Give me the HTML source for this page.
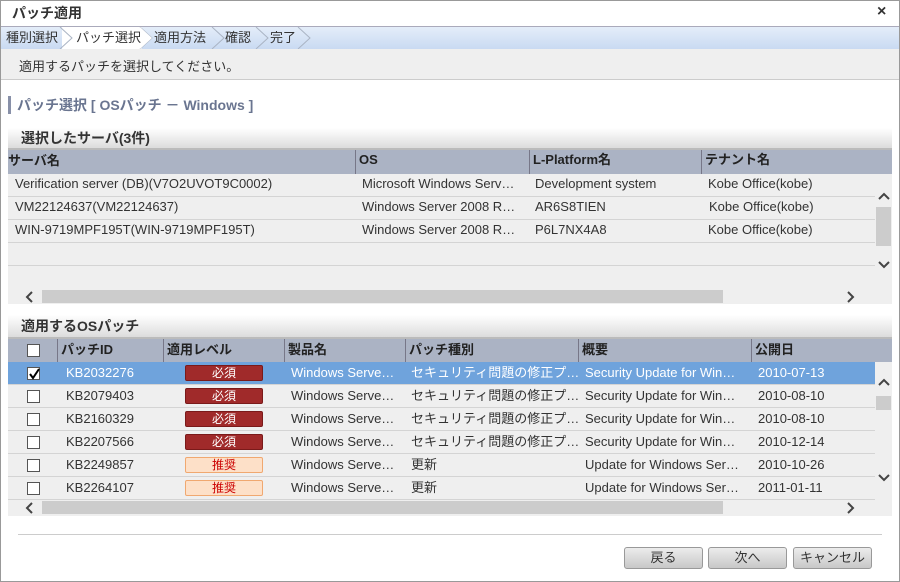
<!DOCTYPE html><html><head><meta charset="utf-8"><style>
*{margin:0;padding:0;box-sizing:border-box}
body{width:900px;height:582px;overflow:hidden;background:#fff;font-family:"Liberation Sans","Noto Sans CJK JP",sans-serif;font-size:13px;line-height:16px;color:#333;position:relative}
.a{position:absolute}
.frame{left:0;top:0;width:900px;height:582px;border:1px solid #999}
.hdr{background:#abb3c4;font-weight:bold;color:#222}
.cell{position:absolute;white-space:nowrap;overflow:hidden;line-height:16px}
.row{position:absolute;left:8px;width:867px;height:23px;border-bottom:1px solid #d4d4d4;background:#efefef}
.cb{position:absolute;width:13px;height:13px;border:1px solid #555;background:#fff}
.bad{position:absolute;left:177px;width:78px;height:16px;top:3px;border-radius:2px;text-align:center;font-size:12px;line-height:14px}
.r{background:#a02a2a;color:#fff;border:1px solid #7a1a1a}
.y{background:#fde0c8;color:#c00;border:1px solid #f0a870}
.btn{position:absolute;top:547px;height:22px;width:79px;border:1px solid #999;border-radius:3px;background:linear-gradient(#ececec,#c8c8c8);text-align:center;line-height:20px;font-size:13px}
.sec{left:8px;width:884px;background:linear-gradient(#fff,#dcdcdc);font-weight:bold;font-size:14px;padding-left:13px;border-bottom:2px solid #bbb}
.hc{position:absolute;white-space:nowrap;border-left:1px solid #778;padding:0 3px;font-weight:bold;color:#222}
</style></head><body>
<div class="a frame"></div>
<div class="a" style="left:12px;top:5px;font-weight:bold;font-size:14px">パッチ適用</div>
<div class="a" style="left:877px;top:4px;font-size:16px;font-weight:bold">×</div>
<div class="a" style="left:1px;top:26px;width:898px;height:23px;background:linear-gradient(#e4edf9,#c9daf2);border-top:1px solid #aab"></div>
<div class="a" style="left:62px;top:27px;width:80px;height:22px;background:#fff"></div>
<svg class="a" style="left:0;top:27px" width="320" height="22"><g fill="none" stroke="#aab4c4"><path d="M60 0L72 11L60 22"/><path d="M140 0L152 11L140 22"/><path d="M212 0L224 11L212 22"/><path d="M256 0L268 11L256 22"/><path d="M298 0L310 11L298 22"/></g><path d="M140 0L152 11L140 22Z" fill="#fff"/></svg>
<div class="a" style="left:6px;top:30px">種別選択</div>
<div class="a" style="left:76px;top:30px">パッチ選択</div>
<div class="a" style="left:154px;top:30px">適用方法</div>
<div class="a" style="left:225px;top:30px">確認</div>
<div class="a" style="left:270px;top:30px">完了</div>
<div class="a" style="left:1px;top:49px;width:898px;height:31px;background:#efefef;border-bottom:1px solid #ccc"></div>
<div class="a" style="left:19px;top:59px">適用するパッチを選択してください。</div>
<div class="a" style="left:8px;top:96px;width:3px;height:18px;background:#8890a8"></div>
<div class="a" style="left:17px;top:97px;font-size:14px;font-weight:bold;color:#6a7590">パッチ選択 [ OSパッチ － Windows ]</div>

<div class="a sec" style="top:128px;height:22px;line-height:20px">選択したサーバ(3件)</div>
<div class="a hdr" style="left:8px;top:150px;width:884px;height:24px"></div>
<div class="a" style="left:8px;top:174px;width:884px;height:130px;background:#efefef"></div>
<div class="cell hdr" style="left:8px;top:153px;background:none">サーバ名</div>
<div class="hc" style="left:355px;top:150px;height:24px;padding-top:2px">OS</div>
<div class="hc" style="left:529px;top:150px;height:24px;padding-top:2px">L-Platform名</div>
<div class="hc" style="left:701px;top:150px;height:24px;padding-top:2px">テナント名</div>
<div class="row" style="top:174px"></div><div class="row" style="top:197px"></div><div class="row" style="top:220px"></div><div class="row" style="top:243px"></div>
<div class="cell" style="left:15px;top:176px">Verification server (DB)(V7O2UVOT9C0002)</div><div class="cell" style="left:362px;top:176px">Microsoft Windows Serv…</div><div class="cell" style="left:535px;top:176px">Development system</div><div class="cell" style="left:708px;top:176px">Kobe Office(kobe)</div>
<div class="cell" style="left:15px;top:199px">VM22124637(VM22124637)</div><div class="cell" style="left:362px;top:199px">Windows Server 2008 R…</div><div class="cell" style="left:535px;top:199px">AR6S8TIEN</div><div class="cell" style="left:709px;top:199px">Kobe Office(kobe)</div>
<div class="cell" style="left:15px;top:222px">WIN-9719MPF195T(WIN-9719MPF195T)</div><div class="cell" style="left:362px;top:222px">Windows Server 2008 R…</div><div class="cell" style="left:535px;top:222px">P6L7NX4A8</div><div class="cell" style="left:708px;top:222px">Kobe Office(kobe)</div>
<div class="a" style="left:876px;top:207px;width:15px;height:39px;background:#ccc"></div>
<svg class="a" style="left:876px;top:190px" width="16" height="80"><g fill="none" stroke="#444" stroke-width="2"><path d="M3 9L8 4L13 9"/><path d="M3 72L8 77L13 72"/></g></svg>
<div class="a" style="left:42px;top:290px;width:681px;height:13px;background:#ccc"></div>
<svg class="a" style="left:22px;top:290px" width="840" height="14"><g fill="none" stroke="#444" stroke-width="2"><path d="M10 2L5 7L10 12"/><path d="M826 2L831 7L826 12"/></g></svg>

<div class="a sec" style="top:315px;height:24px;line-height:22px">適用するOSパッチ</div>
<div class="a hdr" style="left:8px;top:339px;width:884px;height:23px"></div>
<div class="a" style="left:8px;top:362px;width:884px;height:154px;background:#efefef"></div>
<div class="cb" style="left:27px;top:344px"></div>
<div class="hc" style="left:57px;top:339px;height:23px;padding-top:3px">パッチID</div>
<div class="hc" style="left:163px;top:339px;height:23px;padding-top:3px">適用レベル</div>
<div class="hc" style="left:284px;top:339px;height:23px;padding-top:3px">製品名</div>
<div class="hc" style="left:405px;top:339px;height:23px;padding-top:3px">パッチ種別</div>
<div class="hc" style="left:578px;top:339px;height:23px;padding-top:3px">概要</div>
<div class="hc" style="left:751px;top:339px;height:23px;padding-top:3px">公開日</div>

<div class="row" style="top:362px;background:#6fa3dc;color:#fff"><div class="cb" style="left:19px;top:5px"></div><svg class="a" style="left:20px;top:6px" width="12" height="12"><path d="M2 6L5 10L11 1" fill="none" stroke="#000" stroke-width="2"/></svg><div class="cell" style="left:58px;top:3px">KB2032276</div><div class="bad r">必須</div><div class="cell" style="left:283px;top:3px">Windows Serve…</div><div class="cell" style="left:403px;top:3px">セキュリティ問題の修正プ…</div><div class="cell" style="left:577px;top:3px">Security Update for Win…</div><div class="cell" style="left:750px;top:3px">2010-07-13</div></div>
<div class="row" style="top:385px"><div class="cb" style="left:19px;top:5px"></div><div class="cell" style="left:58px;top:3px">KB2079403</div><div class="bad r">必須</div><div class="cell" style="left:283px;top:3px">Windows Serve…</div><div class="cell" style="left:403px;top:3px">セキュリティ問題の修正プ…</div><div class="cell" style="left:577px;top:3px">Security Update for Win…</div><div class="cell" style="left:750px;top:3px">2010-08-10</div></div>
<div class="row" style="top:408px"><div class="cb" style="left:19px;top:5px"></div><div class="cell" style="left:58px;top:3px">KB2160329</div><div class="bad r">必須</div><div class="cell" style="left:283px;top:3px">Windows Serve…</div><div class="cell" style="left:403px;top:3px">セキュリティ問題の修正プ…</div><div class="cell" style="left:577px;top:3px">Security Update for Win…</div><div class="cell" style="left:750px;top:3px">2010-08-10</div></div>
<div class="row" style="top:431px"><div class="cb" style="left:19px;top:5px"></div><div class="cell" style="left:58px;top:3px">KB2207566</div><div class="bad r">必須</div><div class="cell" style="left:283px;top:3px">Windows Serve…</div><div class="cell" style="left:403px;top:3px">セキュリティ問題の修正プ…</div><div class="cell" style="left:577px;top:3px">Security Update for Win…</div><div class="cell" style="left:750px;top:3px">2010-12-14</div></div>
<div class="row" style="top:454px"><div class="cb" style="left:19px;top:5px"></div><div class="cell" style="left:58px;top:3px">KB2249857</div><div class="bad y">推奨</div><div class="cell" style="left:283px;top:3px">Windows Serve…</div><div class="cell" style="left:403px;top:3px">更新</div><div class="cell" style="left:577px;top:3px">Update for Windows Ser…</div><div class="cell" style="left:750px;top:3px">2010-10-26</div></div>
<div class="row" style="top:477px"><div class="cb" style="left:19px;top:5px"></div><div class="cell" style="left:58px;top:3px">KB2264107</div><div class="bad y">推奨</div><div class="cell" style="left:283px;top:3px">Windows Serve…</div><div class="cell" style="left:403px;top:3px">更新</div><div class="cell" style="left:577px;top:3px">Update for Windows Ser…</div><div class="cell" style="left:750px;top:3px">2011-01-11</div></div>
<div class="a" style="left:876px;top:396px;width:15px;height:14px;background:#ccc"></div>
<svg class="a" style="left:876px;top:376px" width="16" height="110"><g fill="none" stroke="#444" stroke-width="2"><path d="M3 9L8 4L13 9"/><path d="M3 99L8 104L13 99"/></g></svg>
<div class="a" style="left:42px;top:501px;width:681px;height:13px;background:#ccc"></div>
<svg class="a" style="left:22px;top:501px" width="840" height="14"><g fill="none" stroke="#444" stroke-width="2"><path d="M10 2L5 7L10 12"/><path d="M826 2L831 7L826 12"/></g></svg>

<div class="a" style="left:18px;top:534px;width:864px;height:1px;background:#ccc"></div>
<div class="btn" style="left:624px">戻る</div>
<div class="btn" style="left:708px">次へ</div>
<div class="btn" style="left:793px">キャンセル</div>
</body></html>
